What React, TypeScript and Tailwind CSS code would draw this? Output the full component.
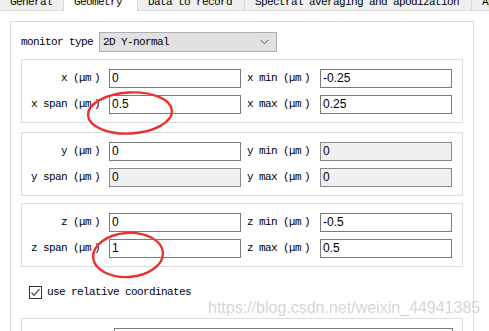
import React from "react";

const mono = "font-['Liberation_Mono','Noto_Sans_CJK_SC',monospace] text-[11px] tracking-[-0.6px] text-black";
const sans = "font-['Liberation_Sans',Arial,sans-serif] text-[12px] text-black";

function Lbl({ p }: { p: string }) {
  return (
    <>
      {p + " (μm"}
      <span className="inline-block w-[12px] text-center">)</span>
    </>
  );
}

function Input({ value, disabled, w = "w-[132px]" }: { value: string; disabled?: boolean; w?: string }) {
  return (
    <div
      className={`${w} h-[19px] shrink-0 border ${disabled ? "bg-[#f0f0f0] border-[#8a8a8a]" : "bg-white border-[#7a7a7a]"} flex items-center pl-[2px] ${sans} leading-[17px]`}
    >
      {value}
    </div>
  );
}

function Row({ l1, v1, d1, l2, v2, d2 }: { l1: string; v1: string; d1?: boolean; l2: string; v2: string; d2?: boolean }) {
  return (
    <div className="flex items-center h-[19px]">
      <div className={`w-[87px] shrink-0 text-right pr-[6px] ${mono} leading-[19px] whitespace-pre`}>
        <Lbl p={l1} />
      </div>
      <Input value={v1} disabled={d1} />
      <div className={`w-[79px] shrink-0 pl-[6px] ${mono} leading-[19px] whitespace-pre`}>
        <Lbl p={l2} />
      </div>
      <Input value={v2} disabled={d2} />
    </div>
  );
}

function Group({ a, b }: { a: React.ReactNode; b: React.ReactNode }) {
  return (
    <div className="border border-[#dcdcdc] pt-[9px] pb-[8px] flex flex-col gap-[7px]">
      {a}
      {b}
    </div>
  );
}

export default function App() {
  const tabs = [
    { t: "General", w: "w-[64px]" },
    { t: "Geometry", w: "w-[74px]", sel: true },
    { t: "Data to record", w: "w-[107px]" },
    { t: "Spectral averaging and apodization", w: "w-[227px]" },
    { t: "Apodization", w: "w-[60px]" },
  ];
  return (
    <div className="relative w-[489px] h-[331px] overflow-hidden bg-white">
      {/* tabs */}
      <div className="flex h-[11px] overflow-hidden">
        {tabs.map((t) => (
          <div
            key={t.t}
            className={`${t.w} shrink-0 h-[11px] overflow-hidden pl-[10px] ${t.sel ? "bg-white border-r border-[#d9d9d9]" : "bg-[#f0f0f0] border-r border-b border-[#d9d9d9]"} ${mono}`}
          >
            <span className="block -mt-[4px] leading-[12px] whitespace-pre">{t.t}</span>
          </div>
        ))}
      </div>

      {/* outer panel */}
      <div className="ml-[10px] mt-[10px] w-[464px] h-[400px] border border-[#d9d9d9] px-[10px] pt-[10px]">
        <div className="flex items-center h-[20px]">
          <div className={`w-[78px] shrink-0 ${mono} leading-[20px]`}>monitor type</div>
          <div className="w-[178px] h-[20px] bg-[#e1e1e1] border border-[#adadad] flex items-center justify-between pl-[3px] pr-[7px]">
            <span className={`${mono} leading-[18px]`}>2D Y-normal</span>
            <svg width="9" height="6" viewBox="0 0 9 6">
              <polyline points="0.5,0.8 4.5,4.8 8.5,0.8" fill="none" stroke="#555" strokeWidth="1" />
            </svg>
          </div>
        </div>

        <div className="mt-[7px]">
          <Group
            a={<Row l1="x" v1="0" l2="x min" v2="-0.25" />}
            b={<Row l1="x span" v1="0.5" l2="x max" v2="0.25" />}
          />
        </div>
        <div className="mt-[9px]">
          <Group
            a={<Row l1="y" v1="0" l2="y min" v2="0" d2 />}
            b={<Row l1="y span" v1="0" d1 l2="y max" v2="0" d2 />}
          />
        </div>
        <div className="mt-[7px]">
          <Group
            a={<Row l1="z" v1="0" l2="z min" v2="-0.5" />}
            b={<Row l1="z span" v1="1" l2="z max" v2="0.5" />}
          />
        </div>

        <div className="mt-[19px] ml-[8px] flex items-center h-[13px]">
          <div className="w-[13px] h-[13px] border border-[#333] bg-white flex items-center justify-center">
            <svg width="11" height="11" viewBox="0 0 11 11">
              <polyline points="1.5,5.5 4,8.5 9.5,2" fill="none" stroke="#555" strokeWidth="1.2" />
            </svg>
          </div>
          <span className={`ml-[5px] ${mono} leading-[13px]`}>use relative coordinates</span>
        </div>

        <div className="mt-[19px] h-[60px] border border-[#dcdcdc] pt-[9px] pl-[92px]">
          <div className="w-[339px] h-[30px] border border-[#7a7a7a] bg-white" />
        </div>
      </div>

      {/* watermark */}
      <div className="absolute left-[208px] top-[300px] font-['Liberation_Sans',Arial,sans-serif] text-[16px] leading-[16px] text-[#d6d6d6] whitespace-pre pointer-events-none">
        https://blog.csdn.net/weixin_44941385
      </div>

      {/* red annotations */}
      <svg className="absolute left-0 top-0 pointer-events-none" width="489" height="331" viewBox="0 0 489 331">
        <ellipse cx="130" cy="113" rx="42" ry="20.5" fill="none" stroke="#e8322f" strokeWidth="2.4" transform="rotate(-3 130 113)" />
        <ellipse cx="128" cy="255" rx="35" ry="22" fill="none" stroke="#e8322f" strokeWidth="2.4" transform="rotate(-4 128 255)" />
      </svg>
    </div>
  );
}
